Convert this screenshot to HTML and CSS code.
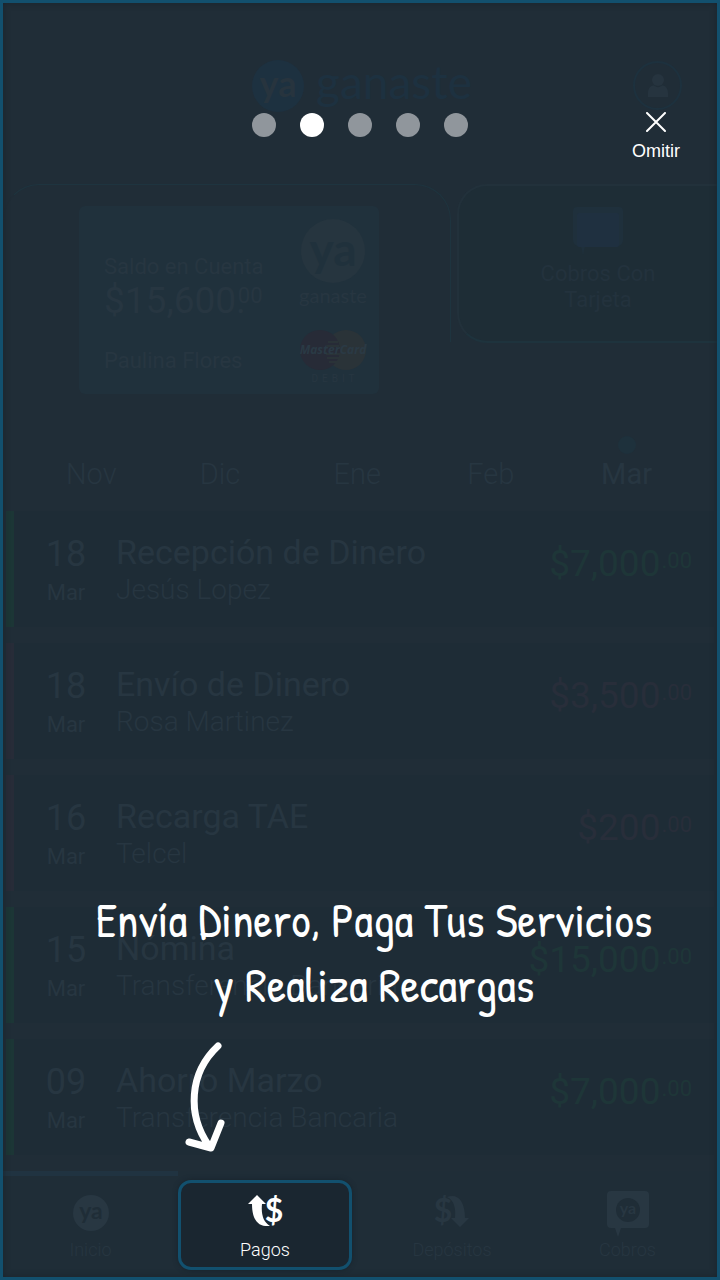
FILE: index.html
```html
<!DOCTYPE html>
<html lang="es">
<head>
<meta charset="utf-8">
<meta name="viewport" content="width=device-width, initial-scale=1">
<title>ya ganaste</title>
<link rel="stylesheet" href="styles.css">
</head>
<body>
<div class="screen">
  <div class="app">
    <header class="header">
      <div class="brand"><span class="brand-mark">ya</span><span class="brand-name">ganaste</span></div>
      <button class="profile" type="button" aria-label="Perfil">
        <svg width="22" height="24" viewBox="0 0 22 24"><circle cx="11" cy="6" r="6"/><path d="M1 23V19C1 14 4 11 7 11.500Q11 15 15 11.500C18 11 21 14 21 19V23Z"/></svg>
      </button>
    </header>

    <section class="panels">
      <div class="panel-account">
        <div class="card">
          <div class="card-info">
            <span class="card-label">Saldo en Cuenta</span>
            <span class="card-balance">$15,600.<sup>00</sup></span>
            <span class="card-label card-holder">Paulina Flores</span>
          </div>
          <div class="card-brand">
            <span class="card-mark">ya</span>
            <span class="card-name">ganaste</span>
            <svg class="mastercard" width="68" height="42" viewBox="0 0 68 42">
              <circle cx="47" cy="21" r="20" fill="#2a3338"/>
              <circle cx="21" cy="21" r="20" fill="#272b37"/>
              <path d="M29 13H39M28 17H40M27 25H41M28 29H40M30 33H38" stroke="#2a3338" stroke-width="2"/>
              <text x="34" y="25" text-anchor="middle">MasterCard</text>
            </svg>
            <span class="card-type">DEBIT</span>
          </div>
        </div>
      </div>
      <div class="panel-charge">
        <svg width="50" height="50" viewBox="0 0 50 50"><path d="M4 1H46Q50 1 50 5V34Q50 39 45 40H12L10 49L8 40H5Q0 39 0 34V5Q0 1 4 1Z" fill="#1f303c"/><rect x="4" y="7" width="42" height="34" rx="2" fill="#1f3040"/></svg>
        <span>Cobros Con<br>Tarjeta</span>
      </div>
    </section>

    <div class="months">
      <span>Nov</span><span>Dic</span><span>Ene</span><span>Feb</span><span class="current">Mar</span>
    </div>

    <ul class="moves">
      <li class="move income"><div class="date"><b>18</b><span>Mar</span></div><div class="detail"><b>Recepción de Dinero</b><span>Jesús Lopez</span></div><div class="amount">$7,000<small>.00</small></div></li>
      <li class="move expense"><div class="date"><b>18</b><span>Mar</span></div><div class="detail"><b>Envío de Dinero</b><span>Rosa Martinez</span></div><div class="amount">$3,500<small>.00</small></div></li>
      <li class="move expense"><div class="date"><b>16</b><span>Mar</span></div><div class="detail"><b>Recarga TAE</b><span>Telcel</span></div><div class="amount">$200<small>.00</small></div></li>
      <li class="move income"><div class="date"><b>15</b><span>Mar</span></div><div class="detail"><b>Nómina</b><span>Transferencia Bancaria</span></div><div class="amount">$15,000<small>.00</small></div></li>
      <li class="move income"><div class="date"><b>09</b><span>Mar</span></div><div class="detail"><b>Ahorro Marzo</b><span>Transferencia Bancaria</span></div><div class="amount">$7,000<small>.00</small></div></li>
    </ul>

    <nav class="tabs">
      <button class="tab selected" type="button">
        <svg width="44" height="44" viewBox="0 0 44 44"><circle class="ico" cx="22" cy="22" r="18"/><text class="cut" x="22" y="28" font-size="23" text-anchor="middle">ya</text></svg>
        <span>Inicio</span>
      </button>
      <button class="tab spotlight" type="button">
        <svg width="44" height="44" viewBox="0 0 44 44"><path class="ico" d="M14 4L23 13H19C18 23 20 31 27 35C17 36 9 31 9 13H5Z"/><text class="ico" x="31" y="31" font-size="32" text-anchor="middle">$</text></svg>
        <span>Pagos</span>
      </button>
      <button class="tab deposits" type="button">
        <svg width="44" height="44" viewBox="0 0 44 44"><path class="ico" d="M17 6C27 2 35 9 35 27H39L30 36L21 27H25C26 17 24 9 17 6Z"/><text class="ico" x="13" y="31" font-size="32" text-anchor="middle">$</text></svg>
        <span>Depósitos</span>
      </button>
      <button class="tab" type="button">
        <svg width="44" height="44" viewBox="0 0 44 44"><path class="ico" d="M5 0H39Q43 0 43 4V33Q43 37 39 37H15L12 46L9 37H5Q1 37 1 33V4Q1 0 5 0Z"/><circle class="cut" cx="22" cy="19" r="12"/><text class="ico" x="22" y="23" font-size="16" text-anchor="middle">ya</text></svg>
        <span>Cobros</span>
      </button>
    </nav>
  </div>

  <div class="tour">
    <div class="tour-bar">
      <div class="dots">
        <button class="dot" type="button" aria-label="Paso 1"></button>
        <button class="dot active" type="button" aria-label="Paso 2"></button>
        <button class="dot" type="button" aria-label="Paso 3"></button>
        <button class="dot" type="button" aria-label="Paso 4"></button>
        <button class="dot" type="button" aria-label="Paso 5"></button>
      </div>
      <button class="skip" type="button">
        <svg width="20" height="20" viewBox="0 0 20 20"><path d="M1 1L19 19M19 1L1 19" stroke="#fff" stroke-width="2" stroke-linecap="round"/></svg>
        <span>Omitir</span>
      </button>
    </div>
    <div class="tour-tip">
      <p>Envía Dinero, Paga Tus Servicios<br>y Realiza Recargas</p>
      <svg class="arrow" width="44" height="112" viewBox="0 0 44 112"><path d="M36 5C7 32 5 74 27 105M7 101L29 107L39 82" fill="none" stroke="#fff" stroke-width="7" stroke-linecap="round" stroke-linejoin="round"/></svg>
    </div>
  </div>
</div>
</body>
</html>
```
FILE: styles.css
```css
* { box-sizing: border-box; }

body {
  margin: 0;
  background: #202d37;
  color: #273641;
  font-family: Roboto, "Liberation Sans", sans-serif;
}

button {
  padding: 0;
  border: 0;
  background: none;
  color: inherit;
  font: inherit;
}

svg { display: block; flex: none; }

.screen {
  position: relative;
  min-height: 100vh;
  border: 3px solid #12506e;
  overflow: hidden;
}

/* Dimmed application */
.header {
  display: grid;
  grid-template-columns: 1fr auto 1fr;
  align-items: center;
  height: 181px;
  padding: 0 35px 16px;
}

.brand {
  grid-column: 2;
  display: flex;
  align-items: center;
  gap: 12px;
  padding-left: 4px;
  color: #1d3140;
}

.brand-mark, .card-mark {
  display: flex;
  align-items: center;
  justify-content: center;
  border-radius: 50%;
  font-family: Lato, sans-serif;
  font-weight: 700;
}

.brand-mark {
  width: 52px;
  height: 52px;
  padding-bottom: 6px;
  background: #1d3140;
  color: #27343e;
  font-size: 36px;
}

.brand-name {
  margin-bottom: 8px;
  font-family: Lato, sans-serif;
  font-size: 46px;
  line-height: 52px;
}

.profile {
  justify-self: end;
  display: flex;
  align-items: center;
  justify-content: center;
  width: 49px;
  height: 49px;
  border: 2px solid #1d313e;
  border-radius: 50%;
  fill: #26343f;
}

.panels {
  display: grid;
  grid-template-columns: minmax(0, 448fr) minmax(0, 260fr);
  align-items: start;
  gap: 6px;
  height: 242px;
}

.panel-account {
  display: flex;
  align-items: flex-start;
  height: 158px;
  padding: 21px 0 0 75px;
  border: 1px solid #1e343f;
  border-bottom: 0;
  border-left-color: #202d37;
  border-radius: 36px 36px 0 0;
}

.card {
  display: flex;
  justify-content: space-between;
  flex: 0 0 300px;
  height: 188px;
  padding: 13px 12px 8px 25px;
  border-radius: 6px;
  background: #20313c;
}

.card-info {
  display: flex;
  flex-direction: column;
  padding-top: 35px;
}

.card-label { font-size: 22px; line-height: 26px; }
.card-balance { font-size: 37px; line-height: 42px; }
.card-balance sup { margin-left: -8px; font-size: 22px; line-height: 0; vertical-align: 10px; }
.card-holder { margin-top: 26px; }

.card-brand {
  display: flex;
  flex-direction: column;
  align-items: center;
  width: 68px;
}

.card-mark {
  flex: none;
  width: 64px;
  height: 64px;
  padding-bottom: 6px;
  background: #26353f;
  color: #20313c;
  font-size: 46px;
}

.card-name { font: 20px/24px Lato, sans-serif; }
.mastercard { margin-top: 22px; }
.mastercard text { font: italic bold 12px "Open Sans", sans-serif; fill: #2a3a45; }
.card-type { margin-left: 4px; font-size: 10px; line-height: 16px; letter-spacing: 4px; }

.panel-charge {
  display: flex;
  flex-direction: column;
  align-items: center;
  height: 159px;
  padding: 20px 0 0 20px;
  border: 2px solid #22313b;
  border-right: 0;
  border-bottom-color: #1e333d;
  border-radius: 30px 0 0 30px;
  background: #1e2d36;
  color: #23323d;
  font-size: 22px;
  line-height: 26px;
  text-align: center;
}

.panel-charge svg { margin-bottom: 5px; }

.months {
  display: grid;
  grid-template-columns: repeat(4, 1fr) auto;
  height: 82px;
  padding: 30px 65px 0 63px;
  font-size: 29px;
  font-weight: 300;
  line-height: 36px;
}

.current { position: relative; font-weight: 400; }

.current::before {
  content: "";
  position: absolute;
  top: -20px;
  left: calc(50% - 9px);
  width: 18px;
  height: 18px;
  border-radius: 50%;
  background: #1e313c;
}

.moves {
  display: flex;
  flex-direction: column;
  gap: 16px;
  margin: 0;
  padding: 3px 3px 16px;
  list-style: none;
}

.move {
  display: flex;
  height: 116px;
  padding: 0 22px 0 28px;
  border-left: 8px solid;
  background: #1e2c36;
}

.income { border-color: #1c3636; }
.expense { border-color: #272c38; }

.date, .detail { display: flex; flex-direction: column; }
.date { align-items: center; width: 48px; padding-top: 22px; }
.date b { font-size: 36px; font-weight: 400; line-height: 42px; }
.date span { font-size: 22px; line-height: 36px; }
.detail { flex: 1; padding: 20px 0 0 26px; }
.detail b { font-size: 34px; font-weight: 400; line-height: 42px; }
.detail span { font-size: 28px; font-weight: 300; line-height: 34px; }
.amount { padding-top: 29px; font-size: 37px; line-height: 48px; }
.amount small { margin-left: 1px; font-size: 22px; line-height: 0; vertical-align: 8px; }
.income .amount { color: #1e3638; }
.expense .amount { color: #282e3a; }

.tabs {
  display: grid;
  grid-template-columns: 175fr 174fr 186fr 179fr;
  height: 105px;
  background: #1f2d37;
}

.tab {
  display: flex;
  flex-direction: column;
  align-items: center;
  margin: 9px 0 6px;
  padding-top: 8px;
  border: 3px solid transparent;
  font-size: 18px;
  font-weight: 300;
  line-height: 22px;
}

.tab svg { margin-bottom: 4px; overflow: visible; }
.ico { fill: #283742; }
.cut { fill: #1f2d37; }
.tab text { font-family: Lato, sans-serif; font-weight: 700; }

.selected { box-shadow: 0 -4px #1f2d37, 0 -9px #203341; }
.deposits { padding-left: 14px; }

.spotlight {
  position: relative;
  border-color: #12506e;
  border-radius: 13px;
  background: #1a2630;
  box-shadow: 0 0 5px #18232b;
  color: #fff;
}

.spotlight .ico { fill: #fff; }

/* Guided tour layer */
.tour {
  position: absolute;
  inset: 0;
  display: flex;
  flex-direction: column;
  justify-content: space-between;
  box-shadow: inset 0 0 6px #1a242c;
  color: #fff;
}

.tour-bar {
  display: grid;
  grid-template-columns: 1fr auto 1fr;
  align-items: start;
  padding: 109px 37px 0;
}

.dots { grid-column: 2; display: flex; gap: 24px; padding-top: 1px; }
.dot { width: 24px; height: 24px; border-radius: 50%; background: #90969c; }
.active { background: #fff; }

.skip {
  justify-self: end;
  display: flex;
  flex-direction: column;
  align-items: center;
  gap: 8px;
  font: 18px/22px "Liberation Sans", Arial, sans-serif;
}

.tour-tip { padding: 0 0 124px; }

.tour-tip p {
  margin: 0 0 24px;
  padding-left: 28px;
  font-family: "Patrick Hand", "Open Sans", sans-serif;
  font-size: 48px;
  line-height: 65px;
  text-align: center;
}

.arrow { margin-left: 179px; }
```
